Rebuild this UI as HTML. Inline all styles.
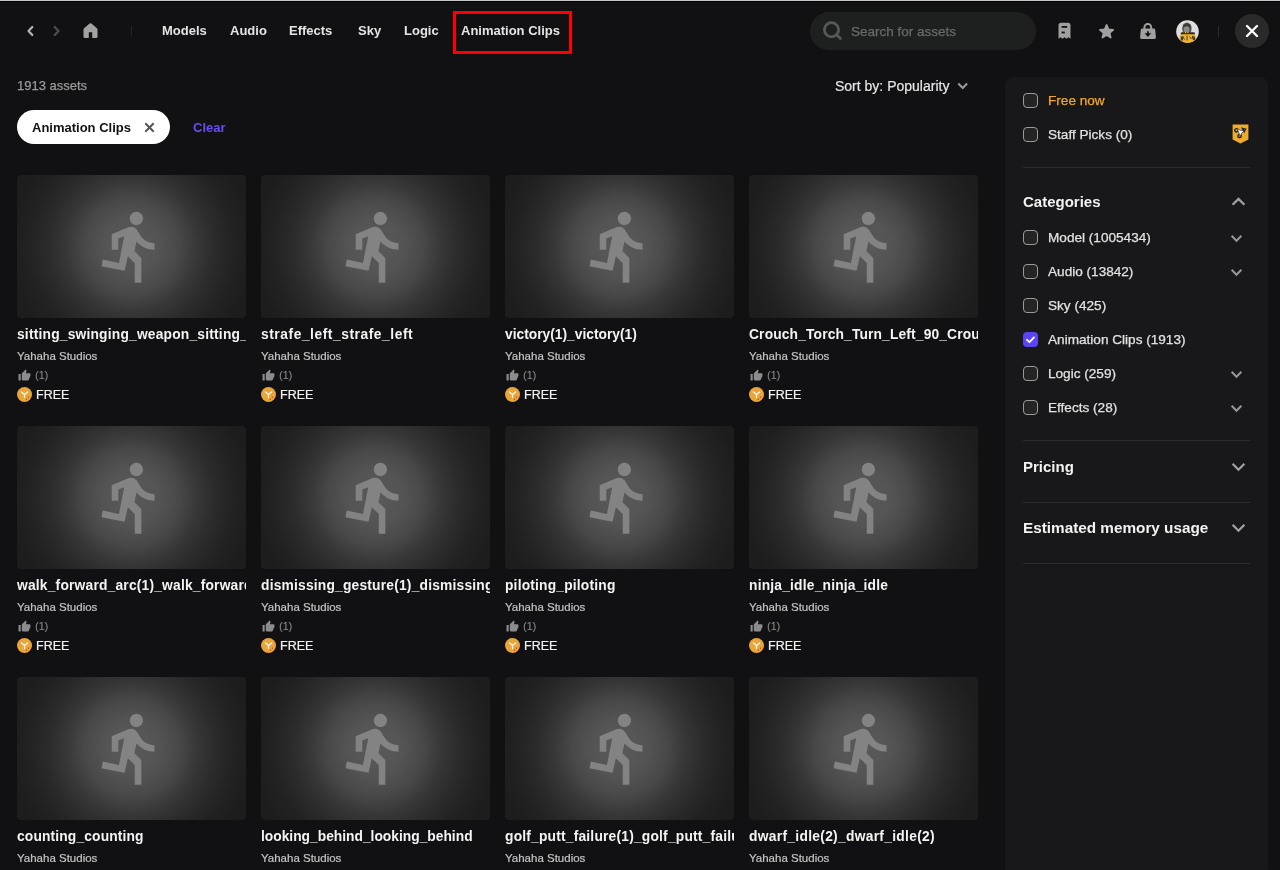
<!DOCTYPE html>
<html><head><meta charset="utf-8">
<style>
*{box-sizing:border-box;margin:0;padding:0}
html,body{width:1280px;height:870px;overflow:hidden;background:#111113;font-family:"Liberation Sans",sans-serif;color:#e6e6e6}
body{position:relative}
#root{position:absolute;left:0;top:0;width:1280px;height:870px;will-change:transform}
.topline{position:absolute;left:0;top:-1px;width:1280px;height:1px;background:#c8c8c8}
.blk{position:absolute;left:0;top:0;width:1280px;height:1px;background:#000}
.abs{position:absolute}
.nav{font-size:13px;font-weight:700;color:#e4e4e4;position:absolute;top:24px;line-height:14px;white-space:nowrap}
.redbox{position:absolute;left:453px;top:11px;width:119px;height:43px;border:3px solid #ff0000}
.search{position:absolute;left:810px;top:12px;width:226px;height:38px;border-radius:19px;background:#1e1f1f}
.search .ph{position:absolute;left:41px;top:13px;font-size:13.5px;color:#6a6a6a;line-height:14px;white-space:nowrap;-webkit-text-stroke:0.25px currentColor}
.close{position:absolute;left:1235px;top:14px;width:34px;height:34px;border-radius:50%;background:#2a2a2a}
.count{position:absolute;left:17px;top:79px;font-size:13px;color:#9a9a9a;line-height:14px;-webkit-text-stroke:0.25px currentColor}
.sort{position:absolute;left:835px;top:79px;font-size:14px;color:#e6e6e6;line-height:14px;white-space:nowrap;-webkit-text-stroke:0.2px currentColor}
.chip{position:absolute;left:17px;top:110px;width:153px;height:34px;border-radius:17px;background:#fff}
.chip span{position:absolute;left:15px;top:11px;font-size:13px;font-weight:700;color:#111;line-height:14px;white-space:nowrap}
.clear{position:absolute;left:193px;top:121px;font-size:13px;font-weight:700;color:#6a4cf6;line-height:14px}
.grid{position:absolute;left:17px;top:175px;width:961px}
.card{position:absolute;width:229px;height:240px}
.img{position:absolute;left:0;top:0;width:229px;height:143px;border-radius:4px;background:radial-gradient(circle at 50% 50%,#5a5a5a 0px,#545454 28px,#484848 48px,#373737 66px,#2b2b2b 84px,#222222 103px,#1d1d1d 122px)}
.run{position:absolute;left:75px;top:32px;width:79px;height:79px;fill:#838383}
.title{position:absolute;left:0;top:153px;width:229px;overflow:hidden;white-space:nowrap;font-size:13.8px;font-weight:700;color:#f4f4f4;line-height:14px}
.author{position:absolute;left:0;top:175px;font-size:11.5px;color:#c4c4c4;-webkit-text-stroke:0.2px currentColor;line-height:12px;white-space:nowrap}
.likes{position:absolute;left:0;top:193px;height:14px;color:#8c8c8c;font-size:11.5px;line-height:14px}
.likes .thumb{position:absolute;left:1px;top:1px;width:13px;height:13px;fill:#8c8c8c}
.likes .lk{position:absolute;left:18px;top:0;letter-spacing:-0.4px}
.price{position:absolute;left:0;top:212px;height:16px}
.coin{position:absolute;left:0;top:0;width:15px;height:15px;border-radius:50%;background:#e8a63a}
.coin svg{width:15px;height:15px;display:block}
.price .fr{position:absolute;left:19px;top:1px;font-size:12.5px;color:#f2f2f2;line-height:14px;-webkit-text-stroke:0.2px currentColor}
.panel{position:absolute;left:1005px;top:77px;width:263px;height:800px;border-radius:8px;background:#18181a}
.cb{position:absolute;width:15px;height:15px;border:1.7px solid #9a9a9a;border-radius:4px;background:#242424}
.cb.on{border:none;background:#5b44f2}
.lbl{position:absolute;font-size:13.6px;color:#e2e2e2;line-height:14px;white-space:nowrap;-webkit-text-stroke:0.25px currentColor}
.hdr{position:absolute;font-size:15px;font-weight:700;color:#f2f2f2;line-height:16px;white-space:nowrap}
.div{position:absolute;left:1023px;width:227px;height:1px;background:#2a2a2b}
svg.chev{position:absolute;overflow:visible}
</style></head><body><div id="root">
<div class="abs" style="left:0;top:0;width:1280px;height:1px;background:#c8c8c8"></div><div class="abs" style="left:0;top:1px;width:1280px;height:1px;background:#000"></div>

<!-- top nav -->
<svg class="abs" style="left:26px;top:25px;width:9px;height:12px" viewBox="0 0 9 12"><path d="M6.3 2 L2.5 6 L6.3 10" stroke="#b4b4b4" stroke-width="2.2" fill="none" stroke-linecap="round" stroke-linejoin="round"/></svg>
<svg class="abs" style="left:52px;top:25px;width:9px;height:12px" viewBox="0 0 9 12"><path d="M2.7 2 L6.5 6 L2.7 10" stroke="#4e4e4e" stroke-width="2.2" fill="none" stroke-linecap="round" stroke-linejoin="round"/></svg>
<svg class="abs" style="left:83px;top:22px;width:15px;height:16px" viewBox="0 0 15 16"><path d="M6.6 1.6 Q7.5 0.9 8.4 1.6 L13.9 6.2 Q14.5 6.7 14.5 7.5 V14.8 Q14.5 16 13.3 16 H9.2 V10.2 H5.8 V16 H1.7 Q0.5 16 0.5 14.8 V7.5 Q0.5 6.7 1.1 6.2 Z" fill="#a2a2a2"/></svg>
<div class="abs" style="left:131px;top:26px;width:1px;height:10px;background:#262626"></div>

<div class="nav" style="left:162px">Models</div>
<div class="nav" style="left:230px">Audio</div>
<div class="nav" style="left:289px">Effects</div>
<div class="nav" style="left:358px">Sky</div>
<div class="nav" style="left:404px">Logic</div>
<div class="nav" style="left:461px">Animation Clips</div>
<div class="redbox"></div>

<div class="search">
<svg class="abs" style="left:10px;top:8px;width:24px;height:24px" viewBox="0 0 24 24"><circle cx="11.5" cy="9.7" r="7.1" stroke="#575757" stroke-width="2.8" fill="none"/><path d="M16.6 14.8 L20.4 18.6" stroke="#575757" stroke-width="2.8" stroke-linecap="round"/></svg>
<div class="ph">Search for assets</div>
</div>

<!-- receipt -->
<svg class="abs" style="left:1058px;top:22px;width:14px;height:18px" viewBox="0 0 14 18"><path d="M0.5 3.3 a2.5 2.5 0 0 1 2.5 -2.5 h7 a2.5 2.5 0 0 1 2.5 2.5 V16.8 L10.4 15.2 L8.4 16.8 L6.5 15.2 L4.5 16.8 L2.5 15.2 L0.5 16.8 Z" fill="#a0a0a0"/><rect x="3.6" y="4" width="5.6" height="1.8" fill="#121214"/><rect x="3.6" y="9.6" width="3.2" height="1.8" fill="#121214"/></svg>
<!-- star -->
<svg class="abs" style="left:1098.5px;top:23.8px;width:15.2px;height:14.8px" viewBox="0.6 0.6 22.8 22.2"><path d="M12 17.27L18.18 21l-1.64-7.03L22 9.24l-7.19-.61L12 2 9.19 8.63 2 9.24l5.46 4.73L5.82 21z" fill="#a0a0a0" stroke="#a0a0a0" stroke-width="2.6" stroke-linejoin="round"/></svg>
<!-- lock download -->
<svg class="abs" style="left:1140px;top:23px;width:16px;height:17px" viewBox="0 0 16 17"><path d="M4.4 7 V4.3 a3.4 3.4 0 0 1 6.8 0 V7" stroke="#a0a0a0" stroke-width="2" fill="none"/><path d="M2.2 5.5 H13.8 Q15 5.5 15.2 6.7 L15.9 14.3 Q16 16 14.4 16 H1.6 Q0 16 0.1 14.3 L0.8 6.7 Q1 5.5 2.2 5.5 Z" fill="#a0a0a0"/><path d="M7.9 8.3 V12" stroke="#121214" stroke-width="1.8"/><path d="M4.6 10.3 H11.2 L7.9 14 Z" fill="#121214"/></svg>
<!-- avatar -->
<svg class="abs" style="left:1176px;top:19.5px;width:23px;height:23px" viewBox="0 0 23 23"><defs><clipPath id="av"><circle cx="11.5" cy="11.5" r="11.3"/></clipPath></defs><circle cx="11.5" cy="11.5" r="11.3" fill="#dedede"/><g clip-path="url(#av)"><ellipse cx="10.9" cy="8.6" rx="4.7" ry="6" fill="#505050"/><ellipse cx="10.6" cy="9.6" rx="2.8" ry="3.6" fill="#8c8c8c"/><path d="M7 5.5 Q11 2 15 5.8 L14.5 7.5 Q11 5.2 7.5 7.3 Z" fill="#3a3a3a"/><rect x="4.8" y="12.2" width="14" height="3" rx="1" fill="#2a2c34"/><path d="M3.5 23.5 V16.5 Q3.5 14.2 6 14.2 H17.5 Q19.8 14.2 19.8 16.5 V19 L21.5 19.5 V23.5 Z" fill="#f4b421"/><path d="M6.5 16 L8.5 19.5 M11 15.5 V20.5 M13.5 16.5 L15.5 19 M16.5 15.8 V18.5" stroke="#3a3d50" stroke-width="1" fill="none"/><rect x="4.8" y="16.5" width="2.2" height="4" fill="#3a3d50"/><rect x="16.8" y="16.5" width="2.2" height="3.5" fill="#3a3d50"/><rect x="9" y="12" width="1.2" height="1.2" fill="#f4b421"/><rect x="11.3" y="12" width="1.2" height="1.2" fill="#f4b421"/></g></svg>
<div class="abs" style="left:1218px;top:26px;width:1px;height:11px;background:#2a2a2a"></div>
<div class="close">
<svg class="abs" style="left:10px;top:10px;width:14px;height:14px" viewBox="0 0 14 14"><path d="M2 2 L12 12 M12 2 L2 12" stroke="#fafafa" stroke-width="2.4" stroke-linecap="round"/></svg>
</div>

<div class="count">1913 assets</div>
<div class="sort">Sort by: Popularity</div>
<svg class="chev" style="left:957px;top:82px;width:12px;height:8px" viewBox="0 0 12 8"><path d="M1.3 1.5 L5.7 5.9 L10.1 1.5" stroke="#999" stroke-width="2.1" fill="none"/></svg>

<div class="chip"><span>Animation Clips</span>
<svg class="abs" style="left:127px;top:12px;width:11px;height:11px" viewBox="0 0 11 11"><path d="M1.3 1.3 L9.7 9.7 M9.7 1.3 L1.3 9.7" stroke="#555" stroke-width="2"/></svg>
</div>
<div class="clear">Clear</div>

<div class="grid">
<div class="card" style="left:0px;top:0px"><div class="img"><svg class="run" viewBox="0 0 24 24"><path d="M13.49 5.48c1.1 0 2-.9 2-2s-.9-2-2-2-2 .9-2 2 .9 2 2 2zm-3.6 13.9l1-4.4 2.1 2v6h2v-7.5l-2.1-2 .6-3c1.3 1.5 3.3 2.5 5.5 2.5v-2c-1.9 0-3.5-1-4.3-2.4l-1-1.6c-.4-.6-1-1-1.7-1-.3 0-.5.1-.8.1l-5.2 2.2v4.7h2v-3.4l1.8-.7-1.6 8.1-4.9-1-.4 2 7 1.4z"/></svg></div><div class="title" style="letter-spacing:0.2px">sitting_swinging_weapon_sitting_swinging_weapon</div><div class="author">Yahaha Studios</div><div class="likes"><svg class="thumb" viewBox="0 0 24 24"><path d="M1 21h4V9H1v12zm22-11c0-1.1-.9-2-2-2h-6.31l.95-4.57.03-.32c0-.41-.17-.79-.44-1.06L14.17 1 7.59 7.59C7.22 7.95 7 8.45 7 9v10c0 1.1.9 2 2 2h9c.83 0 1.54-.5 1.84-1.22l3.02-7.05c.09-.23.14-.47.14-.73v-2z"/></svg><span class="lk">(1)</span></div><div class="price"><span class="coin"><svg viewBox="0 0 15 15"><path d="M4.4 4.9 L7.5 7.5 L10.7 4.9 M7.5 7.5 V10.6" stroke="#f6f6f6" stroke-width="1.25" fill="none" stroke-linecap="round"/><circle cx="11.4" cy="10.1" r=".65" fill="#e81010"/><circle cx="9.4" cy="12.1" r=".65" fill="#e81010"/></svg></span><span class="fr">FREE</span></div></div>
<div class="card" style="left:244px;top:0px"><div class="img"><svg class="run" viewBox="0 0 24 24"><path d="M13.49 5.48c1.1 0 2-.9 2-2s-.9-2-2-2-2 .9-2 2 .9 2 2 2zm-3.6 13.9l1-4.4 2.1 2v6h2v-7.5l-2.1-2 .6-3c1.3 1.5 3.3 2.5 5.5 2.5v-2c-1.9 0-3.5-1-4.3-2.4l-1-1.6c-.4-.6-1-1-1.7-1-.3 0-.5.1-.8.1l-5.2 2.2v4.7h2v-3.4l1.8-.7-1.6 8.1-4.9-1-.4 2 7 1.4z"/></svg></div><div class="title" style="letter-spacing:0.55px">strafe_left_strafe_left</div><div class="author">Yahaha Studios</div><div class="likes"><svg class="thumb" viewBox="0 0 24 24"><path d="M1 21h4V9H1v12zm22-11c0-1.1-.9-2-2-2h-6.31l.95-4.57.03-.32c0-.41-.17-.79-.44-1.06L14.17 1 7.59 7.59C7.22 7.95 7 8.45 7 9v10c0 1.1.9 2 2 2h9c.83 0 1.54-.5 1.84-1.22l3.02-7.05c.09-.23.14-.47.14-.73v-2z"/></svg><span class="lk">(1)</span></div><div class="price"><span class="coin"><svg viewBox="0 0 15 15"><path d="M4.4 4.9 L7.5 7.5 L10.7 4.9 M7.5 7.5 V10.6" stroke="#f6f6f6" stroke-width="1.25" fill="none" stroke-linecap="round"/><circle cx="11.4" cy="10.1" r=".65" fill="#e81010"/><circle cx="9.4" cy="12.1" r=".65" fill="#e81010"/></svg></span><span class="fr">FREE</span></div></div>
<div class="card" style="left:488px;top:0px"><div class="img"><svg class="run" viewBox="0 0 24 24"><path d="M13.49 5.48c1.1 0 2-.9 2-2s-.9-2-2-2-2 .9-2 2 .9 2 2 2zm-3.6 13.9l1-4.4 2.1 2v6h2v-7.5l-2.1-2 .6-3c1.3 1.5 3.3 2.5 5.5 2.5v-2c-1.9 0-3.5-1-4.3-2.4l-1-1.6c-.4-.6-1-1-1.7-1-.3 0-.5.1-.8.1l-5.2 2.2v4.7h2v-3.4l1.8-.7-1.6 8.1-4.9-1-.4 2 7 1.4z"/></svg></div><div class="title" style="letter-spacing:0px">victory(1)_victory(1)</div><div class="author">Yahaha Studios</div><div class="likes"><svg class="thumb" viewBox="0 0 24 24"><path d="M1 21h4V9H1v12zm22-11c0-1.1-.9-2-2-2h-6.31l.95-4.57.03-.32c0-.41-.17-.79-.44-1.06L14.17 1 7.59 7.59C7.22 7.95 7 8.45 7 9v10c0 1.1.9 2 2 2h9c.83 0 1.54-.5 1.84-1.22l3.02-7.05c.09-.23.14-.47.14-.73v-2z"/></svg><span class="lk">(1)</span></div><div class="price"><span class="coin"><svg viewBox="0 0 15 15"><path d="M4.4 4.9 L7.5 7.5 L10.7 4.9 M7.5 7.5 V10.6" stroke="#f6f6f6" stroke-width="1.25" fill="none" stroke-linecap="round"/><circle cx="11.4" cy="10.1" r=".65" fill="#e81010"/><circle cx="9.4" cy="12.1" r=".65" fill="#e81010"/></svg></span><span class="fr">FREE</span></div></div>
<div class="card" style="left:732px;top:0px"><div class="img"><svg class="run" viewBox="0 0 24 24"><path d="M13.49 5.48c1.1 0 2-.9 2-2s-.9-2-2-2-2 .9-2 2 .9 2 2 2zm-3.6 13.9l1-4.4 2.1 2v6h2v-7.5l-2.1-2 .6-3c1.3 1.5 3.3 2.5 5.5 2.5v-2c-1.9 0-3.5-1-4.3-2.4l-1-1.6c-.4-.6-1-1-1.7-1-.3 0-.5.1-.8.1l-5.2 2.2v4.7h2v-3.4l1.8-.7-1.6 8.1-4.9-1-.4 2 7 1.4z"/></svg></div><div class="title" style="letter-spacing:0.15px">Crouch_Torch_Turn_Left_90_Crouch_Torch_Turn_Left_90</div><div class="author">Yahaha Studios</div><div class="likes"><svg class="thumb" viewBox="0 0 24 24"><path d="M1 21h4V9H1v12zm22-11c0-1.1-.9-2-2-2h-6.31l.95-4.57.03-.32c0-.41-.17-.79-.44-1.06L14.17 1 7.59 7.59C7.22 7.95 7 8.45 7 9v10c0 1.1.9 2 2 2h9c.83 0 1.54-.5 1.84-1.22l3.02-7.05c.09-.23.14-.47.14-.73v-2z"/></svg><span class="lk">(1)</span></div><div class="price"><span class="coin"><svg viewBox="0 0 15 15"><path d="M4.4 4.9 L7.5 7.5 L10.7 4.9 M7.5 7.5 V10.6" stroke="#f6f6f6" stroke-width="1.25" fill="none" stroke-linecap="round"/><circle cx="11.4" cy="10.1" r=".65" fill="#e81010"/><circle cx="9.4" cy="12.1" r=".65" fill="#e81010"/></svg></span><span class="fr">FREE</span></div></div>
<div class="card" style="left:0px;top:251px"><div class="img"><svg class="run" viewBox="0 0 24 24"><path d="M13.49 5.48c1.1 0 2-.9 2-2s-.9-2-2-2-2 .9-2 2 .9 2 2 2zm-3.6 13.9l1-4.4 2.1 2v6h2v-7.5l-2.1-2 .6-3c1.3 1.5 3.3 2.5 5.5 2.5v-2c-1.9 0-3.5-1-4.3-2.4l-1-1.6c-.4-.6-1-1-1.7-1-.3 0-.5.1-.8.1l-5.2 2.2v4.7h2v-3.4l1.8-.7-1.6 8.1-4.9-1-.4 2 7 1.4z"/></svg></div><div class="title" style="letter-spacing:0.2px">walk_forward_arc(1)_walk_forward_arc(1)</div><div class="author">Yahaha Studios</div><div class="likes"><svg class="thumb" viewBox="0 0 24 24"><path d="M1 21h4V9H1v12zm22-11c0-1.1-.9-2-2-2h-6.31l.95-4.57.03-.32c0-.41-.17-.79-.44-1.06L14.17 1 7.59 7.59C7.22 7.95 7 8.45 7 9v10c0 1.1.9 2 2 2h9c.83 0 1.54-.5 1.84-1.22l3.02-7.05c.09-.23.14-.47.14-.73v-2z"/></svg><span class="lk">(1)</span></div><div class="price"><span class="coin"><svg viewBox="0 0 15 15"><path d="M4.4 4.9 L7.5 7.5 L10.7 4.9 M7.5 7.5 V10.6" stroke="#f6f6f6" stroke-width="1.25" fill="none" stroke-linecap="round"/><circle cx="11.4" cy="10.1" r=".65" fill="#e81010"/><circle cx="9.4" cy="12.1" r=".65" fill="#e81010"/></svg></span><span class="fr">FREE</span></div></div>
<div class="card" style="left:244px;top:251px"><div class="img"><svg class="run" viewBox="0 0 24 24"><path d="M13.49 5.48c1.1 0 2-.9 2-2s-.9-2-2-2-2 .9-2 2 .9 2 2 2zm-3.6 13.9l1-4.4 2.1 2v6h2v-7.5l-2.1-2 .6-3c1.3 1.5 3.3 2.5 5.5 2.5v-2c-1.9 0-3.5-1-4.3-2.4l-1-1.6c-.4-.6-1-1-1.7-1-.3 0-.5.1-.8.1l-5.2 2.2v4.7h2v-3.4l1.8-.7-1.6 8.1-4.9-1-.4 2 7 1.4z"/></svg></div><div class="title" style="letter-spacing:0.2px">dismissing_gesture(1)_dismissing_gesture(1)</div><div class="author">Yahaha Studios</div><div class="likes"><svg class="thumb" viewBox="0 0 24 24"><path d="M1 21h4V9H1v12zm22-11c0-1.1-.9-2-2-2h-6.31l.95-4.57.03-.32c0-.41-.17-.79-.44-1.06L14.17 1 7.59 7.59C7.22 7.95 7 8.45 7 9v10c0 1.1.9 2 2 2h9c.83 0 1.54-.5 1.84-1.22l3.02-7.05c.09-.23.14-.47.14-.73v-2z"/></svg><span class="lk">(1)</span></div><div class="price"><span class="coin"><svg viewBox="0 0 15 15"><path d="M4.4 4.9 L7.5 7.5 L10.7 4.9 M7.5 7.5 V10.6" stroke="#f6f6f6" stroke-width="1.25" fill="none" stroke-linecap="round"/><circle cx="11.4" cy="10.1" r=".65" fill="#e81010"/><circle cx="9.4" cy="12.1" r=".65" fill="#e81010"/></svg></span><span class="fr">FREE</span></div></div>
<div class="card" style="left:488px;top:251px"><div class="img"><svg class="run" viewBox="0 0 24 24"><path d="M13.49 5.48c1.1 0 2-.9 2-2s-.9-2-2-2-2 .9-2 2 .9 2 2 2zm-3.6 13.9l1-4.4 2.1 2v6h2v-7.5l-2.1-2 .6-3c1.3 1.5 3.3 2.5 5.5 2.5v-2c-1.9 0-3.5-1-4.3-2.4l-1-1.6c-.4-.6-1-1-1.7-1-.3 0-.5.1-.8.1l-5.2 2.2v4.7h2v-3.4l1.8-.7-1.6 8.1-4.9-1-.4 2 7 1.4z"/></svg></div><div class="title" style="letter-spacing:0.19px">piloting_piloting</div><div class="author">Yahaha Studios</div><div class="likes"><svg class="thumb" viewBox="0 0 24 24"><path d="M1 21h4V9H1v12zm22-11c0-1.1-.9-2-2-2h-6.31l.95-4.57.03-.32c0-.41-.17-.79-.44-1.06L14.17 1 7.59 7.59C7.22 7.95 7 8.45 7 9v10c0 1.1.9 2 2 2h9c.83 0 1.54-.5 1.84-1.22l3.02-7.05c.09-.23.14-.47.14-.73v-2z"/></svg><span class="lk">(1)</span></div><div class="price"><span class="coin"><svg viewBox="0 0 15 15"><path d="M4.4 4.9 L7.5 7.5 L10.7 4.9 M7.5 7.5 V10.6" stroke="#f6f6f6" stroke-width="1.25" fill="none" stroke-linecap="round"/><circle cx="11.4" cy="10.1" r=".65" fill="#e81010"/><circle cx="9.4" cy="12.1" r=".65" fill="#e81010"/></svg></span><span class="fr">FREE</span></div></div>
<div class="card" style="left:732px;top:251px"><div class="img"><svg class="run" viewBox="0 0 24 24"><path d="M13.49 5.48c1.1 0 2-.9 2-2s-.9-2-2-2-2 .9-2 2 .9 2 2 2zm-3.6 13.9l1-4.4 2.1 2v6h2v-7.5l-2.1-2 .6-3c1.3 1.5 3.3 2.5 5.5 2.5v-2c-1.9 0-3.5-1-4.3-2.4l-1-1.6c-.4-.6-1-1-1.7-1-.3 0-.5.1-.8.1l-5.2 2.2v4.7h2v-3.4l1.8-.7-1.6 8.1-4.9-1-.4 2 7 1.4z"/></svg></div><div class="title" style="letter-spacing:0.2px">ninja_idle_ninja_idle</div><div class="author">Yahaha Studios</div><div class="likes"><svg class="thumb" viewBox="0 0 24 24"><path d="M1 21h4V9H1v12zm22-11c0-1.1-.9-2-2-2h-6.31l.95-4.57.03-.32c0-.41-.17-.79-.44-1.06L14.17 1 7.59 7.59C7.22 7.95 7 8.45 7 9v10c0 1.1.9 2 2 2h9c.83 0 1.54-.5 1.84-1.22l3.02-7.05c.09-.23.14-.47.14-.73v-2z"/></svg><span class="lk">(1)</span></div><div class="price"><span class="coin"><svg viewBox="0 0 15 15"><path d="M4.4 4.9 L7.5 7.5 L10.7 4.9 M7.5 7.5 V10.6" stroke="#f6f6f6" stroke-width="1.25" fill="none" stroke-linecap="round"/><circle cx="11.4" cy="10.1" r=".65" fill="#e81010"/><circle cx="9.4" cy="12.1" r=".65" fill="#e81010"/></svg></span><span class="fr">FREE</span></div></div>
<div class="card" style="left:0px;top:502px"><div class="img"><svg class="run" viewBox="0 0 24 24"><path d="M13.49 5.48c1.1 0 2-.9 2-2s-.9-2-2-2-2 .9-2 2 .9 2 2 2zm-3.6 13.9l1-4.4 2.1 2v6h2v-7.5l-2.1-2 .6-3c1.3 1.5 3.3 2.5 5.5 2.5v-2c-1.9 0-3.5-1-4.3-2.4l-1-1.6c-.4-.6-1-1-1.7-1-.3 0-.5.1-.8.1l-5.2 2.2v4.7h2v-3.4l1.8-.7-1.6 8.1-4.9-1-.4 2 7 1.4z"/></svg></div><div class="title" style="letter-spacing:0.15px">counting_counting</div><div class="author">Yahaha Studios</div><div class="likes"><svg class="thumb" viewBox="0 0 24 24"><path d="M1 21h4V9H1v12zm22-11c0-1.1-.9-2-2-2h-6.31l.95-4.57.03-.32c0-.41-.17-.79-.44-1.06L14.17 1 7.59 7.59C7.22 7.95 7 8.45 7 9v10c0 1.1.9 2 2 2h9c.83 0 1.54-.5 1.84-1.22l3.02-7.05c.09-.23.14-.47.14-.73v-2z"/></svg><span class="lk">(1)</span></div><div class="price"><span class="coin"><svg viewBox="0 0 15 15"><path d="M4.4 4.9 L7.5 7.5 L10.7 4.9 M7.5 7.5 V10.6" stroke="#f6f6f6" stroke-width="1.25" fill="none" stroke-linecap="round"/><circle cx="11.4" cy="10.1" r=".65" fill="#e81010"/><circle cx="9.4" cy="12.1" r=".65" fill="#e81010"/></svg></span><span class="fr">FREE</span></div></div>
<div class="card" style="left:244px;top:502px"><div class="img"><svg class="run" viewBox="0 0 24 24"><path d="M13.49 5.48c1.1 0 2-.9 2-2s-.9-2-2-2-2 .9-2 2 .9 2 2 2zm-3.6 13.9l1-4.4 2.1 2v6h2v-7.5l-2.1-2 .6-3c1.3 1.5 3.3 2.5 5.5 2.5v-2c-1.9 0-3.5-1-4.3-2.4l-1-1.6c-.4-.6-1-1-1.7-1-.3 0-.5.1-.8.1l-5.2 2.2v4.7h2v-3.4l1.8-.7-1.6 8.1-4.9-1-.4 2 7 1.4z"/></svg></div><div class="title" style="letter-spacing:0px">looking_behind_looking_behind</div><div class="author">Yahaha Studios</div><div class="likes"><svg class="thumb" viewBox="0 0 24 24"><path d="M1 21h4V9H1v12zm22-11c0-1.1-.9-2-2-2h-6.31l.95-4.57.03-.32c0-.41-.17-.79-.44-1.06L14.17 1 7.59 7.59C7.22 7.95 7 8.45 7 9v10c0 1.1.9 2 2 2h9c.83 0 1.54-.5 1.84-1.22l3.02-7.05c.09-.23.14-.47.14-.73v-2z"/></svg><span class="lk">(1)</span></div><div class="price"><span class="coin"><svg viewBox="0 0 15 15"><path d="M4.4 4.9 L7.5 7.5 L10.7 4.9 M7.5 7.5 V10.6" stroke="#f6f6f6" stroke-width="1.25" fill="none" stroke-linecap="round"/><circle cx="11.4" cy="10.1" r=".65" fill="#e81010"/><circle cx="9.4" cy="12.1" r=".65" fill="#e81010"/></svg></span><span class="fr">FREE</span></div></div>
<div class="card" style="left:488px;top:502px"><div class="img"><svg class="run" viewBox="0 0 24 24"><path d="M13.49 5.48c1.1 0 2-.9 2-2s-.9-2-2-2-2 .9-2 2 .9 2 2 2zm-3.6 13.9l1-4.4 2.1 2v6h2v-7.5l-2.1-2 .6-3c1.3 1.5 3.3 2.5 5.5 2.5v-2c-1.9 0-3.5-1-4.3-2.4l-1-1.6c-.4-.6-1-1-1.7-1-.3 0-.5.1-.8.1l-5.2 2.2v4.7h2v-3.4l1.8-.7-1.6 8.1-4.9-1-.4 2 7 1.4z"/></svg></div><div class="title" style="letter-spacing:0.2px">golf_putt_failure(1)_golf_putt_failure(1)</div><div class="author">Yahaha Studios</div><div class="likes"><svg class="thumb" viewBox="0 0 24 24"><path d="M1 21h4V9H1v12zm22-11c0-1.1-.9-2-2-2h-6.31l.95-4.57.03-.32c0-.41-.17-.79-.44-1.06L14.17 1 7.59 7.59C7.22 7.95 7 8.45 7 9v10c0 1.1.9 2 2 2h9c.83 0 1.54-.5 1.84-1.22l3.02-7.05c.09-.23.14-.47.14-.73v-2z"/></svg><span class="lk">(1)</span></div><div class="price"><span class="coin"><svg viewBox="0 0 15 15"><path d="M4.4 4.9 L7.5 7.5 L10.7 4.9 M7.5 7.5 V10.6" stroke="#f6f6f6" stroke-width="1.25" fill="none" stroke-linecap="round"/><circle cx="11.4" cy="10.1" r=".65" fill="#e81010"/><circle cx="9.4" cy="12.1" r=".65" fill="#e81010"/></svg></span><span class="fr">FREE</span></div></div>
<div class="card" style="left:732px;top:502px"><div class="img"><svg class="run" viewBox="0 0 24 24"><path d="M13.49 5.48c1.1 0 2-.9 2-2s-.9-2-2-2-2 .9-2 2 .9 2 2 2zm-3.6 13.9l1-4.4 2.1 2v6h2v-7.5l-2.1-2 .6-3c1.3 1.5 3.3 2.5 5.5 2.5v-2c-1.9 0-3.5-1-4.3-2.4l-1-1.6c-.4-.6-1-1-1.7-1-.3 0-.5.1-.8.1l-5.2 2.2v4.7h2v-3.4l1.8-.7-1.6 8.1-4.9-1-.4 2 7 1.4z"/></svg></div><div class="title" style="letter-spacing:0.3px">dwarf_idle(2)_dwarf_idle(2)</div><div class="author">Yahaha Studios</div><div class="likes"><svg class="thumb" viewBox="0 0 24 24"><path d="M1 21h4V9H1v12zm22-11c0-1.1-.9-2-2-2h-6.31l.95-4.57.03-.32c0-.41-.17-.79-.44-1.06L14.17 1 7.59 7.59C7.22 7.95 7 8.45 7 9v10c0 1.1.9 2 2 2h9c.83 0 1.54-.5 1.84-1.22l3.02-7.05c.09-.23.14-.47.14-.73v-2z"/></svg><span class="lk">(1)</span></div><div class="price"><span class="coin"><svg viewBox="0 0 15 15"><path d="M4.4 4.9 L7.5 7.5 L10.7 4.9 M7.5 7.5 V10.6" stroke="#f6f6f6" stroke-width="1.25" fill="none" stroke-linecap="round"/><circle cx="11.4" cy="10.1" r=".65" fill="#e81010"/><circle cx="9.4" cy="12.1" r=".65" fill="#e81010"/></svg></span><span class="fr">FREE</span></div></div>
</div>

<!-- panel -->
<div class="panel"></div>
<div class="cb" style="left:1023px;top:93px"></div>
<div class="lbl" style="left:1048px;top:94px;color:#f0a82c">Free now</div>
<div class="cb" style="left:1023px;top:127px"></div>
<div class="lbl" style="left:1048px;top:128px">Staff Picks (0)</div>
<svg class="abs" style="left:1232px;top:123.5px;width:17px;height:20px" viewBox="0 0 17 20"><path d="M0.6 0.5 H16.4 V15.6 L8.5 19.5 L0.6 15.6 Z" fill="#edac2e"/><g fill="none" stroke="#1d1d22" stroke-width="1.3"><circle cx="4.4" cy="6.3" r="1.7"/><path d="M10.3 4.3 L13.6 5.2 L12.2 7.8 Z"/><circle cx="7.6" cy="12" r="1.7"/></g><path d="M4.8 4.6 Q8.6 7.2 12.6 6.6 Q9 8.6 8 12.8 Q7.2 8.4 4.8 4.6 Z" fill="#f8f8f8" stroke="#2a2a30" stroke-width=".7"/></svg>
<div class="div" style="top:167px"></div>

<div class="hdr" style="left:1023px;top:194px">Categories</div>
<svg class="chev" style="left:1231px;top:196px;width:15px;height:10px" viewBox="0 0 15 10"><path d="M1.6 8.8 L7.5 2.9 L13.4 8.8" stroke="#a0a0a0" stroke-width="2.3" fill="none"/></svg>

<div class="cb" style="left:1023px;top:230px"></div>
<div class="lbl" style="left:1048px;top:231px">Model (1005434)</div>
<svg class="chev" style="left:1230px;top:234px;width:13px;height:8px" viewBox="0 0 13 8"><path d="M1.6 1.8 L6.5 6.7 L11.4 1.8" stroke="#969696" stroke-width="2.1" fill="none"/></svg>
<div class="cb" style="left:1023px;top:264px"></div>
<div class="lbl" style="left:1048px;top:265px">Audio (13842)</div>
<svg class="chev" style="left:1230px;top:268px;width:13px;height:8px" viewBox="0 0 13 8"><path d="M1.6 1.8 L6.5 6.7 L11.4 1.8" stroke="#969696" stroke-width="2.1" fill="none"/></svg>
<div class="cb" style="left:1023px;top:298px"></div>
<div class="lbl" style="left:1048px;top:299px">Sky (425)</div>
<div class="cb on" style="left:1023px;top:332px"><svg class="abs" style="left:0;top:0;width:15px;height:15px" viewBox="0 0 15 15"><path d="M4 7.8 L6.5 10.2 L11 5.3" stroke="#fff" stroke-width="1.8" fill="none" stroke-linecap="round" stroke-linejoin="round"/></svg></div>
<div class="lbl" style="left:1048px;top:333px">Animation Clips (1913)</div>
<div class="cb" style="left:1023px;top:366px"></div>
<div class="lbl" style="left:1048px;top:367px">Logic (259)</div>
<svg class="chev" style="left:1230px;top:370px;width:13px;height:8px" viewBox="0 0 13 8"><path d="M1.6 1.8 L6.5 6.7 L11.4 1.8" stroke="#969696" stroke-width="2.1" fill="none"/></svg>
<div class="cb" style="left:1023px;top:400px"></div>
<div class="lbl" style="left:1048px;top:401px">Effects (28)</div>
<svg class="chev" style="left:1230px;top:404px;width:13px;height:8px" viewBox="0 0 13 8"><path d="M1.6 1.8 L6.5 6.7 L11.4 1.8" stroke="#969696" stroke-width="2.1" fill="none"/></svg>
<div class="div" style="top:440px"></div>

<div class="hdr" style="left:1023px;top:459px">Pricing</div>
<svg class="chev" style="left:1231px;top:462px;width:15px;height:10px" viewBox="0 0 15 10"><path d="M1.6 1.8 L7.5 7.7 L13.4 1.8" stroke="#a0a0a0" stroke-width="2.3" fill="none"/></svg>
<div class="div" style="top:502px"></div>

<div class="hdr" style="left:1023px;top:520px;font-size:15.3px">Estimated memory usage</div>
<svg class="chev" style="left:1231px;top:523px;width:15px;height:10px" viewBox="0 0 15 10"><path d="M1.6 1.8 L7.5 7.7 L13.4 1.8" stroke="#a0a0a0" stroke-width="2.3" fill="none"/></svg>
<div class="div" style="top:563px"></div>

</div></body></html>
